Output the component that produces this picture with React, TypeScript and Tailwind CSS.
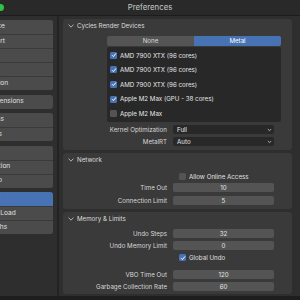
import React from "react";

const font = { fontFamily: "Inter, 'Noto Sans', sans-serif" };

function Chevron() {
  return (
    <svg width="6" height="4" viewBox="0 0 6 4" className="shrink-0">
      <path d="M0.6 0.6 L3 3.2 L5.4 0.6" fill="none" stroke="#bdbdbd" strokeWidth="0.9" />
    </svg>
  );
}

function Check({ on }: { on: boolean }) {
  return on ? (
    <div className="w-[7px] h-[7px] rounded-[1.5px] bg-[#4772b3] flex items-center justify-center shrink-0">
      <svg width="6" height="6" viewBox="0 0 6 6">
        <path d="M1 3.2 L2.4 4.6 L5 1.4" fill="none" stroke="#ffffff" strokeWidth="1" />
      </svg>
    </div>
  ) : (
    <div className="w-[7px] h-[7px] rounded-[1.5px] bg-[#545454] shrink-0" />
  );
}

function SideGroup({ items, active }: { items: string[]; active?: number }) {
  return (
    <div className="flex flex-col rounded-[3px] overflow-hidden bg-[#4b4b4b]">
      {items.map((t, i) => (
        <div
          key={t}
          className={
            "h-[14px] flex items-center pl-[17px] text-[6.6px] whitespace-nowrap " +
            (i > 0 ? "border-t border-[#3a3a3a] " : "") +
            (i === active ? "bg-[#4772b3] text-white" : "bg-[#4b4b4b] text-[#e0e0e0]")
          }
        >
          {t}
        </div>
      ))}
    </div>
  );
}

function Panel({ title, children }: { title: string; children: React.ReactNode }) {
  return (
    <div className="bg-[#3a3a3a] rounded-[3px] flex flex-col">
      <div className="h-[11px] mt-[1px] flex items-center gap-[2px] pl-[5px] text-[6.2px] text-[#dcdcdc]">
        <Chevron />
        <span className="ml-[1px]">{title}</span>
      </div>
      {children}
    </div>
  );
}

function FieldRow({ label, value, className = "" }: { label: string; value: string; className?: string }) {
  return (
    <div className={"flex items-center h-[9px] " + className}>
      <div className="w-[110px] text-right pr-[6px] text-[6.2px] text-[#d8d8d8] whitespace-nowrap">{label}</div>
      <div className="w-[101px] h-[9px] rounded-[2px] bg-[#545454] flex items-center justify-center text-[6.2px] text-[#e6e6e6]">
        {value}
      </div>
    </div>
  );
}

function DropRow({ label, value, className = "" }: { label: string; value: string; className?: string }) {
  return (
    <div className={"flex items-center h-[9px] " + className}>
      <div className="w-[110px] text-right pr-[6px] text-[6.2px] text-[#d8d8d8] whitespace-nowrap">{label}</div>
      <div className="w-[101px] h-[9px] rounded-[2px] bg-[#282828] flex items-center justify-between pl-[4px] pr-[2px] text-[6.2px] text-[#e6e6e6]">
        <span>{value}</span>
        <svg width="5" height="4" viewBox="0 0 5 4">
          <path d="M0.8 1 L2.5 2.7 L4.2 1" fill="none" stroke="#cfcfcf" strokeWidth="0.8" />
        </svg>
      </div>
    </div>
  );
}

function CheckRow({ label, on, className = "" }: { label: string; on: boolean; className?: string }) {
  return (
    <div className={"flex items-center h-[9px] pl-[116px] gap-[3px] text-[6.2px] text-[#e0e0e0] " + className}>
      <Check on={on} />
      <span>{label}</span>
    </div>
  );
}

export default function App() {
  const devices: [string, boolean][] = [
    ["AMD 7900 XTX (96 cores)", true],
    ["AMD 7900 XTX (96 cores)", true],
    ["AMD 7900 XTX (96 cores)", true],
    ["Apple M2 Max (GPU - 38 cores)", true],
    ["Apple M2 Max", false],
  ];
  return (
    <div className="w-[300px] h-[300px] bg-[#2e2e2e] overflow-hidden flex flex-col" style={font}>
      <div className="h-[16px] shrink-0 bg-[#292929] border-b border-[#1c1c1c] flex items-center">
        <div className="w-[7px] h-[7px] rounded-full bg-[#2fc244] ml-[-3px]" />
        <div className="flex-1 text-center text-[7.8px] text-[#c8c8c8] pr-[4px]">Preferences</div>
      </div>
      <div className="flex flex-1 min-h-0">
        <div className="w-[57px] shrink-0 overflow-hidden bg-[#2e2e2e] pt-[4px]">
          <div className="ml-[-40px] w-[93px] flex flex-col">
            <SideGroup items={["Interface", "Viewport", "Lights", "Editing", "Animation"]} />
            <div className="h-[4.5px]" />
            <SideGroup items={["Get Extensions"]} />
            <div className="h-[4.5px]" />
            <SideGroup items={["Add-ons", "Themes"]} />
            <div className="h-[4.5px]" />
            <SideGroup items={["Input", "Navigation", "Keymap"]} />
            <div className="h-[4.5px]" />
            <SideGroup items={["System", "Save & Load", "File Paths"]} active={0} />
          </div>
        </div>
        <div className="w-[2px] shrink-0 bg-[#232323]" />
        <div className="flex-1 flex flex-col pl-[4px] pr-[8px] pt-[3px]">
          <Panel title="Cycles Render Devices">
            <div className="flex flex-col pl-[44px] pr-[11px] mt-[5px]">
              <div className="flex h-[10px] rounded-[2px] overflow-hidden text-[6.2px]">
                <div className="flex-1 bg-[#545454] text-[#dcdcdc] flex items-center justify-center">None</div>
                <div className="flex-1 bg-[#4772b3] text-white flex items-center justify-center">Metal</div>
              </div>
              <div className="mt-[1px] h-[75px] bg-[#282828] rounded-[2px] flex flex-col pt-[1px]">
                {devices.map(([d, on], i) => (
                  <div key={i} className="h-[14.6px] flex items-center gap-[3px] pl-[3px] text-[6.2px] text-[#e6e6e6] whitespace-nowrap">
                    <Check on={on} />
                    <span>{d}</span>
                  </div>
                ))}
              </div>
            </div>
            <div className="flex flex-col pb-[4px]">
              <DropRow label="Kernel Optimization" value="Full" className="mt-[3px]" />
              <DropRow label="MetalRT" value="Auto" className="mt-[3px]" />
            </div>
          </Panel>
          <div className="h-[3px]" />
          <Panel title="Network">
            <div className="flex flex-col pb-[4px]">
              <CheckRow label="Allow Online Access" on={false} className="mt-[7px]" />
              <FieldRow label="Time Out" value="10" className="mt-[2px]" />
              <FieldRow label="Connection Limit" value="5" className="mt-[4px]" />
            </div>
          </Panel>
          <div className="h-[3px]" />
          <Panel title="Memory & Limits">
            <div className="flex flex-col pb-[3px]">
              <FieldRow label="Undo Steps" value="32" className="mt-[5px]" />
              <FieldRow label="Undo Memory Limit" value="0" className="mt-[3px]" />
              <CheckRow label="Global Undo" on={true} className="mt-[3px]" />
              <FieldRow label="VBO Time Out" value="120" className="mt-[8px]" />
              <FieldRow label="Garbage Collection Rate" value="60" className="mt-[3px]" />
            </div>
          </Panel>
          <div className="flex-1" />
        </div>
      </div>
      <div className="h-[4px] shrink-0 bg-[#1e1e1e]" />
    </div>
  );
}
